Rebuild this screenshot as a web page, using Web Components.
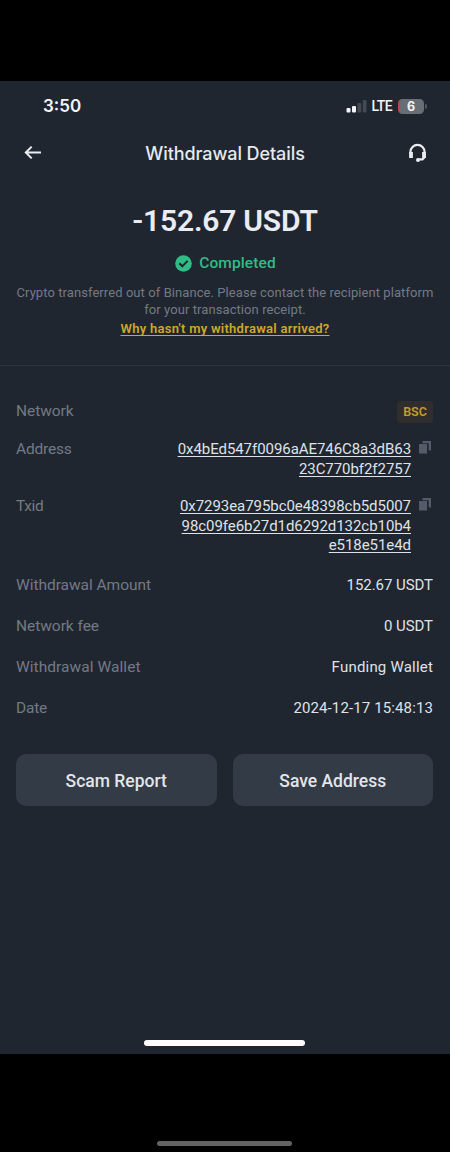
<!DOCTYPE html>
<html lang="en">
<head>
<meta charset="UTF-8">
<title>Withdrawal Details</title>
<style>
  body {
    margin: 0;
    background: #000;
    font-family: Roboto, "Noto Sans", sans-serif;
  }
</style>
</head>
<body>
<withdrawal-page></withdrawal-page>

<script>
class StatusBar extends HTMLElement {
  constructor() {
    super();
    const shadow = this.attachShadow({ mode: 'open' });
    shadow.innerHTML = `
      <style>
        :host {
          display: flex;
          justify-content: space-between;
          align-items: center;
          height: 50px;
          padding: 0 23px 0 43px;
          color: #f3f5f8;
          font-family: Inter, sans-serif;
        }
        .time { font-size: 17px; font-weight: 600; }
        .right { display: flex; align-items: center; }
        .lte {
          margin: 0 6px 0 5px;
          font-family: Roboto, sans-serif;
          font-size: 14px;
          font-weight: 500;
          line-height: 16px;
          letter-spacing: -0.6px;
        }
        .battery {
          width: 26px;
          height: 15px;
          border-radius: 4.5px;
          background: linear-gradient(to right, #b8484c 2px, #696d74 2px);
          font-size: 12.5px;
          font-weight: 700;
          line-height: 15px;
          text-align: center;
        }
        .nub {
          width: 2px;
          height: 5px;
          margin-left: 1px;
          background: #565b63;
          border-radius: 0 2px 2px 0;
        }
        svg { display: block; }
      </style>
      <span class="time">3:50</span>
      <div class="right">
        <svg width="21" height="14" viewBox="0 0 21 14">
          <rect x="0.5" y="9" width="4" height="4.5" rx="1" fill="#f3f5f8"/>
          <rect x="6" y="7" width="4" height="6.5" rx="1" fill="#f3f5f8"/>
          <rect x="11.5" y="4" width="3.7" height="9.5" rx="1" fill="#444a53"/>
          <rect x="16.8" y="1" width="3.7" height="12.5" rx="1" fill="#444a53"/>
        </svg>
        <span class="lte">LTE</span>
        <div class="battery">6</div>
        <div class="nub"></div>
      </div>
    `;
  }
}

class PageHeader extends HTMLElement {
  constructor() {
    super();
    const shadow = this.attachShadow({ mode: 'open' });
    shadow.innerHTML = `
      <style>
        :host {
          display: grid;
          grid-template-columns: 20px 1fr 20px;
          align-items: center;
          height: 44px;
          padding: 0 23px;
          color: #e6e9ee;
        }
        .title {
          font-family: Inter, sans-serif;
          font-size: 18px;
          font-weight: 550;
          text-align: center;
          letter-spacing: -0.08px;
        }
        svg { display: block; }
      </style>
      <svg width="20" height="20" viewBox="0 0 20 20" fill="none" stroke="#eaecef" stroke-width="2">
        <path d="M18 9.500H3M8.700 3.600L2.800 9.500l5.900 5.900"/>
      </svg>
      <span class="title"><slot></slot></span>
      <svg width="20" height="20" viewBox="0 0 20 20" fill="none" stroke="#eaecef">
        <path d="M3.400 10.500V9A7.100 7.100 0 0 1 17.600 9V14L15.500 16.400H11" stroke-width="2.200"/>
        <path d="M4 9v6M17 9v6" stroke-width="3.800"/>
        <circle cx="11" cy="17" r="2" fill="#eaecef" stroke="none"/>
      </svg>
    `;
  }
}

class AmountSummary extends HTMLElement {
  constructor() {
    super();
    const shadow = this.attachShadow({ mode: 'open' });
    shadow.innerHTML = `
      <style>
        :host {
          display: flex;
          flex-direction: column;
          align-items: center;
          box-sizing: border-box;
          height: 191px;
          border-bottom: 1px solid #2c333c;
          text-align: center;
        }
        .amount {
          margin-top: 26px;
          font-size: 30px;
          line-height: 40px;
          font-weight: 600;
          color: #eaecf3;
          white-space: nowrap;
          letter-spacing: -0.2px;
        }
        .status {
          display: flex;
          align-items: center;
          gap: 7px;
          margin: 12px 0 0 1px;
          font-size: 15.5px;
          font-weight: 500;
          line-height: 20px;
          letter-spacing: 0.1px;
          color: #2ebd85;
        }
        .note {
          margin: 11px 0 0;
          font-size: 13px;
          line-height: 17px;
          letter-spacing: 0.075px;
          color: #737a84;
          white-space: nowrap;
        }
        .link {
          margin-top: 2px;
          font-size: 13px;
          line-height: 18px;
          font-weight: 600;
          letter-spacing: 0.27px;
          color: #d0a72b;
          text-decoration: underline;
          text-underline-offset: 2px;
          text-decoration-skip-ink: none;
        }
      </style>
      <div class="amount"><slot></slot></div>
      <div class="status">
        <svg width="17" height="17" viewBox="0 0 17 17">
          <circle cx="8.500" cy="8.500" r="8.300" fill="#2ebd85"/>
          <path d="M4.300 8.300l3 3 5.400-5.400" fill="none" stroke="#202630" stroke-width="2"/>
        </svg>
        <span>Completed</span>
      </div>
      <p class="note">Crypto transferred out of Binance. Please contact the recipient platform<br>for your transaction receipt.</p>
      <a class="link">Why hasn't my withdrawal arrived?</a>
    `;
  }
}

class DetailRow extends HTMLElement {
  constructor() {
    super();
    const shadow = this.attachShadow({ mode: 'open' });
    const copy = this.hasAttribute('copy') ? `
      <svg width="12" height="14" viewBox="0 0 12 14" fill="#555b69">
        <path d="M0 4h8v9.500H0zM3.500 1H12v9.500H9.700V3.200H3.500z"/>
      </svg>` : '';
    shadow.innerHTML = `
      <style>
        :host {
          display: flex;
          justify-content: space-between;
          align-items: flex-start;
          font-size: 15px;
          line-height: 19.6px;
        }
        .label {
          color: #737a84;
          font-size: 15.5px;
          letter-spacing: var(--label-spacing, -0.04px);
        }
        .value {
          display: flex;
          align-items: flex-start;
          gap: 8px;
          color: #dfe2e8;
          text-align: right;
        }
        .text { letter-spacing: var(--value-spacing, -0.06px); }
        :host([copy]) .value { padding-right: 2px; }
        :host([copy]) .text {
          text-decoration: underline;
          text-underline-offset: 2px;
          text-decoration-skip-ink: none;
        }
      </style>
      <span class="label">${this.getAttribute('label')}</span>
      <div class="value"><span class="text"><slot></slot></span>${copy}</div>
    `;
  }
}

class NetworkTag extends HTMLElement {
  constructor() {
    super();
    const shadow = this.attachShadow({ mode: 'open' });
    shadow.innerHTML = `
      <style>
        :host {
          display: block;
          box-sizing: border-box;
          width: 36px;
          height: 22px;
          margin: -1.6px 0 -0.8px;
          border-radius: 4px;
          background: #302e2c;
          color: #c59d25;
          font-size: 12.5px;
          font-weight: 600;
          line-height: 22px;
          text-align: center;
        }
      </style>
      <slot></slot>
    `;
  }
}

class ActionButton extends HTMLElement {
  constructor() {
    super();
    const shadow = this.attachShadow({ mode: 'open' });
    shadow.innerHTML = `
      <style>
        :host { display: block; }
        button {
          display: block;
          width: 100%;
          height: 52px;
          padding: 2px 0 0;
          border: 0;
          border-radius: 10px;
          background: #333b47;
          color: #e2e5ea;
          font-family: inherit;
          font-size: 17.5px;
          font-weight: 500;
        }
      </style>
      <button><slot></slot></button>
    `;
  }
}

class WithdrawalPage extends HTMLElement {
  constructor() {
    super();
    const shadow = this.attachShadow({ mode: 'open' });
    shadow.innerHTML = `
      <style>
        :host {
          display: flex;
          flex-direction: column;
          box-sizing: border-box;
          height: 1152px;
          padding-top: 81px;
        }
        main {
          display: flex;
          flex-direction: column;
          height: 973px;
          background: #202630;
        }
        .details {
          display: flex;
          flex-direction: column;
          padding: 36.4px 17px 0 16px;
        }
        .network { --label-spacing: -0.06px; }
        .address { --label-spacing: -0.2px; margin-top: 18.2px; }
        .txid { --label-spacing: -0.4px; margin-top: 17.8px; }
        .amount { margin-top: 19.6px; }
        .row { margin-top: 21.7px; }
        .wallet { --label-spacing: 0.05px; --value-spacing: 0.2px; }
        .date { --label-spacing: -0.2px; --value-spacing: 0.12px; }
        .actions {
          display: grid;
          grid-template-columns: 1fr 1fr;
          gap: 16px;
          padding: 0 17px 0 16px;
          margin-top: 35px;
        }
        .home {
          width: 161px;
          height: 6px;
          border-radius: 3px;
          background: #fff;
          margin: auto auto 8px 144px;
        }
        .outer-home {
          width: 135px;
          height: 5px;
          border-radius: 3px;
          background: #626262;
          margin: auto auto 6px 157px;
        }
      </style>
      <main>
        <status-bar></status-bar>
        <page-header>Withdrawal Details</page-header>
        <amount-summary>-152.67 USDT</amount-summary>
        <div class="details">
          <detail-row class="network" label="Network"><network-tag>BSC</network-tag></detail-row>
          <detail-row class="address" label="Address" copy>0x4bEd547f0096aAE746C8a3dB63<br>23C770bf2f2757</detail-row>
          <detail-row class="txid" label="Txid" copy>0x7293ea795bc0e48398cb5d5007<br>98c09fe6b27d1d6292d132cb10b4<br>e518e51e4d</detail-row>
          <detail-row class="amount" label="Withdrawal Amount">152.67 USDT</detail-row>
          <detail-row class="row" label="Network fee">0 USDT</detail-row>
          <detail-row class="row wallet" label="Withdrawal Wallet">Funding Wallet</detail-row>
          <detail-row class="row date" label="Date">2024-12-17 15:48:13</detail-row>
        </div>
        <div class="actions">
          <action-button>Scam Report</action-button>
          <action-button>Save Address</action-button>
        </div>
        <div class="home"></div>
      </main>
      <div class="outer-home"></div>
    `;
  }
}

customElements.define('status-bar', StatusBar);
customElements.define('page-header', PageHeader);
customElements.define('amount-summary', AmountSummary);
customElements.define('detail-row', DetailRow);
customElements.define('network-tag', NetworkTag);
customElements.define('action-button', ActionButton);
customElements.define('withdrawal-page', WithdrawalPage);
</script>
</body>
</html>
